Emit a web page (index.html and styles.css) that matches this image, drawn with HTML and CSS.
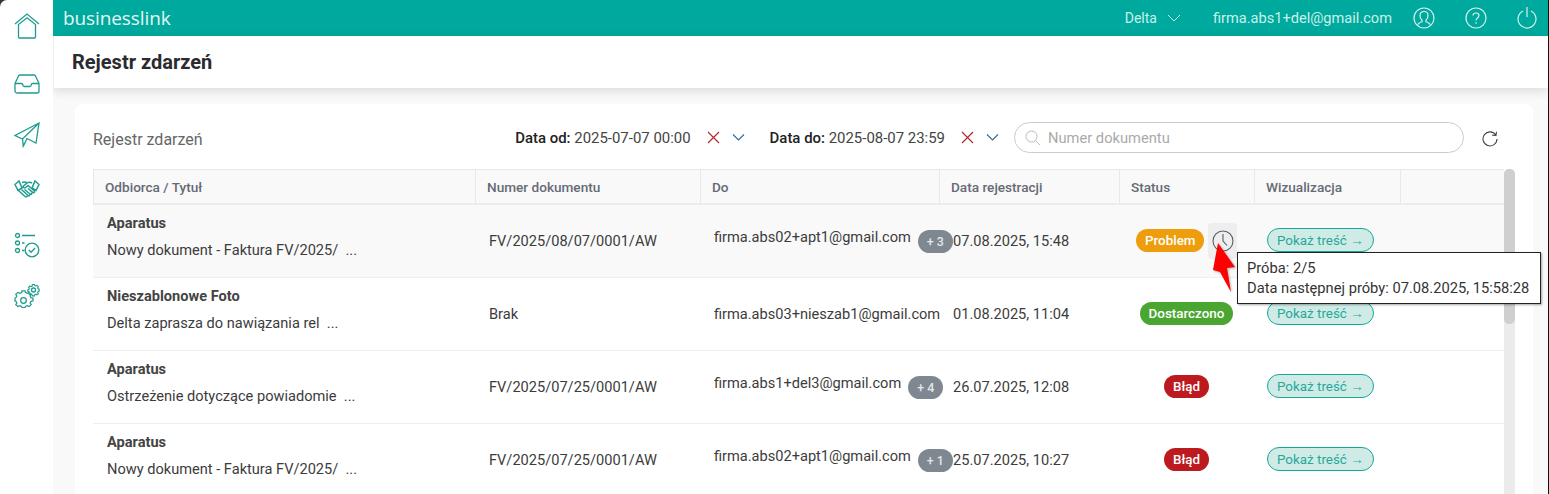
FILE: index.html
```html
<!DOCTYPE html>
<html lang="pl">
<head>
<meta charset="utf-8">
<title>Rejestr zdarzeń</title>
<link rel="stylesheet" href="styles.css">
</head>
<body>
<div class="app">
  <aside class="sidebar">
    <a class="nav-item"><svg width="26" height="26" viewBox="0 0 26 26"><path d="M1 11 13 1l12 10M4.500 11.500V24a1 1 0 0 0 1 1h15a1 1 0 0 0 1-1V11.500L13 4.800z"/></svg></a>
    <a class="nav-item nav-inbox"><svg width="26" height="20" viewBox="0 0 26 20"><path d="M1 9.500 4.500 2a2 2 0 0 1 1.800-1h13.400a2 2 0 0 1 1.800 1L25 9.500V17a2 2 0 0 1-2 2H3a2 2 0 0 1-2-2zM1 9.500h6.500c.7 0 1 .4 1.200 1l.3 1c.2.600.6 1 1.200 1h5.600c.6 0 1-.4 1.200-1l.3-1c.2-.6.5-1 1.200-1H25"/></svg></a>
    <a class="nav-item nav-plane"><svg width="26" height="26" viewBox="0 0 26 26"><path d="M25 1 1 13.500l7.500 3.500L25 1l-3 20-9-4.500-3.800 7.500-.7-7.500M13 16.500l-3.800 8"/></svg></a>
    <a class="nav-item nav-hands"><svg width="26" height="20" viewBox="0 0 26 20"><path d="M1 5.500 5 2l3 7-4 2.500zM25 5.500 21 2l-3 7 4 2.500zM8 3.500c2-.8 3.500-.8 5 .5l-3.500 3c-1 1.200.8 2.500 2 1.500l2.500-2 6.500 5.500M18 4c-2-1.200-3.500-1-5 0M4.500 11.500l6.500 6c1.500 1 2.300-.2 1.800-1M7.500 10.500l6.500 6c1.300.8 2.200-.4 1.500-1.300M10.500 10.500l5.500 4.500c1.300.8 2.300-.4 1.500-1.500M14 9.500l5 4c1.200.6 2-.6 1.300-1.600"/></svg></a>
    <a class="nav-item nav-check"><svg width="26" height="26" viewBox="0 0 26 26"><circle cx="3.500" cy="3.500" r="2"/><circle cx="3.500" cy="11" r="2"/><circle cx="3.500" cy="18.500" r="2"/><path class="thick" d="M8 3.500h13M8 11h2.500M8 18.500h2.500"/><circle cx="18" cy="18" r="6.800"/><path d="m14.800 18 2.300 2.300 4-4.300"/></svg></a>
    <a class="nav-item nav-gears"><svg width="26" height="26" viewBox="0 0 26 26"><circle cx="9.500" cy="16.500" r="2.800"/><path d="M8 9h3l.5 2 1.800.8 1.800-1 2.100 2.100-1 1.800.8 1.800 2 .5v3l-2 .5-.8 1.800 1 1.800-2.100 2.100-1.800-1-1.800.8-.5 1.200H8l-.5-1.200-1.800-.8-1.800 1-2.100-2.100 1-1.800-.8-1.800-1-.5v-3l1-.5.8-1.800-1-1.800 2.100-2.100 1.800 1 1.800-.8z" transform="translate(0 -1.500) scale(1 .92)"/><circle cx="19.500" cy="6" r="2"/><path d="M18.300 1h2.400l.4 1.300 1.200.5 1.200-.7 1.500 1.500-.7 1.200.5 1.200 1.200.4v2.200l-1.200.4-.5 1.200.7 1.200-1.500 1.500-1.200-.7-1.200.5-.4 1.300h-2.400l-.4-1.300-1.200-.5-1.200.7-1.500-1.500.7-1.200-.5-1.200-1.200-.4V7.200l1.200-.4.500-1.200-.7-1.200 1.500-1.500 1.200.7 1.200-.5z" transform="translate(2.300 -.5) scale(.88)"/></svg></a>
  </aside>
  <div class="main">
    <header class="topbar">
      <span class="brand">businesslink</span>
      <div class="topbar-right">
        <span class="org">Delta</span>
        <svg class="org-chev" width="14" height="8" viewBox="0 0 14 8"><path d="m1 1 6 6 6-6"/></svg>
        <span class="user">firma.abs1+del@gmail.com</span>
        <svg class="top-icon ti-user" width="22" height="22" viewBox="0 0 22 22"><circle cx="11" cy="11" r="10"/><path d="M4.500 18.500c.5-2.500 2.500-3.200 4.500-3.800v-1.500C7.500 12 7 10.200 7 8.500 7 6 8.800 4.500 11 4.500S15 6 15 8.500c0 1.700-.5 3.500-2 4.700v1.500c2 .6 4 1.300 4.500 3.800"/></svg>
        <svg class="top-icon" width="22" height="22" viewBox="0 0 22 22"><circle cx="11" cy="11" r="10"/><path d="M8 8.500C8 6.800 9.300 6 11 6s3 1 3 2.500c0 2.500-3 2.500-3 5"/><circle class="dot" cx="11" cy="16" r=".8"/></svg>
        <svg class="top-icon" width="20" height="22" viewBox="0 0 20 22"><path d="M6 4a9 9 0 1 0 8 0M10 0v10"/></svg>
      </div>
    </header>
    <div class="page-head"><h1>Rejestr zdarzeń</h1></div>
    <div class="content">
      <section class="card">
        <div class="toolbar">
          <h2>Rejestr zdarzeń</h2>
          <div class="filters">
            <span class="date"><b>Data od:</b> 2025-07-07 00:00</span>
            <svg class="x" width="13" height="13" viewBox="0 0 13 13"><path d="m1 1 11 11M12 1 1 12"/></svg>
            <svg class="chev" width="13" height="7" viewBox="0 0 13 7"><path d="m1 .5 5.500 5.500L12 .5"/></svg>
            <span class="date date-to"><b>Data do:</b> 2025-08-07 23:59</span>
            <svg class="x" width="13" height="13" viewBox="0 0 13 13"><path d="m1 1 11 11M12 1 1 12"/></svg>
            <svg class="chev" width="13" height="7" viewBox="0 0 13 7"><path d="m1 .5 5.500 5.500L12 .5"/></svg>
            <div class="search">
              <svg width="16" height="16" viewBox="0 0 16 16"><circle cx="6.500" cy="6.500" r="5.500"/><path d="m10.500 10.500 4.500 4.500"/></svg>
              <span>Numer dokumentu</span>
            </div>
            <svg class="refresh" width="16" height="16" viewBox="0 0 16 16"><path d="M13.800 4A7 7 0 1 0 15 8M14.500.8 14 4.500l-3.800-.4"/></svg>
          </div>
        </div>
        <div class="table-area">
          <div class="table">
            <div class="row head">
              <div>Odbiorca / Tytuł</div><div>Numer dokumentu</div><div>Do</div><div>Data rejestracji</div><div>Status</div><div>Wizualizacja</div><div></div>
            </div>
            <div class="row shaded">
              <div class="title"><b>Aparatus</b><span>Nowy dokument - Faktura FV/2025/&nbsp; ...</span></div>
              <div>FV/2025/08/07/0001/AW</div>
              <div class="to"><span>firma.abs02+apt1@gmail.com</span><i class="more">+ 3</i></div>
              <div class="date-cell">07.08.2025, 15:48</div>
              <div class="status has-clock"><em class="badge amber">Problem</em><span class="clock"><svg width="22" height="22" viewBox="0 0 22 22"><circle cx="11" cy="11" r="10"/><path d="M11 4v7l4 4.500"/></svg></span></div>
              <div class="show-cell"><a class="show">Pokaż treść →</a></div><div></div>
            </div>
            <div class="row">
              <div class="title"><b>Nieszablonowe Foto</b><span>Delta zaprasza do nawiązania rel&nbsp; ...</span></div>
              <div>Brak</div>
              <div class="to"><span class="flat">firma.abs03+nieszab1@gmail.com</span></div>
              <div class="date-cell">01.08.2025, 11:04</div>
              <div class="status"><em class="badge green">Dostarczono</em></div>
              <div class="show-cell"><a class="show">Pokaż treść →</a></div><div></div>
            </div>
            <div class="row">
              <div class="title"><b>Aparatus</b><span>Ostrzeżenie dotyczące powiadomie&nbsp; ...</span></div>
              <div>FV/2025/07/25/0001/AW</div>
              <div class="to"><span>firma.abs1+del3@gmail.com</span><i class="more">+ 4</i></div>
              <div class="date-cell">26.07.2025, 12:08</div>
              <div class="status"><em class="badge red">Błąd</em></div>
              <div class="show-cell"><a class="show">Pokaż treść →</a></div><div></div>
            </div>
            <div class="row">
              <div class="title"><b>Aparatus</b><span>Nowy dokument - Faktura FV/2025/&nbsp; ...</span></div>
              <div>FV/2025/07/25/0001/AW</div>
              <div class="to"><span>firma.abs02+apt1@gmail.com</span><i class="more">+ 1</i></div>
              <div class="date-cell">25.07.2025, 10:27</div>
              <div class="status"><em class="badge red">Błąd</em></div>
              <div class="show-cell"><a class="show">Pokaż treść →</a></div><div></div>
            </div>
          </div>
          <div class="scrollbar"><div class="thumb"></div></div>
        </div>
      </section>
    </div>
  </div>
</div>
<div class="tooltip">Próba: 2/5<br>Data następnej próby: 07.08.2025, 15:58:28</div>
<svg class="arrow" width="25" height="52" viewBox="0 0 25 52"><path d="M6 1 23 25l-8 1 4 24L8 30l-7-2z"/></svg>
</body>
</html>
```
FILE: styles.css
```css
* { box-sizing: border-box; }
html, body { margin: 0; height: 100%; overflow: hidden; }
body { font-family: Roboto, "Liberation Sans", sans-serif; font-size: 14.6px; color: #3c3c3c; background: #f9f9f9; }
.app { display: flex; height: 494px; width: 1549px; }

.sidebar { width: 53px; flex: none; background: #fff; display: flex; flex-direction: column; align-items: center; padding-top: 13px; border-top-left-radius: 7px; box-shadow: -8px -8px 0 8px #333; position: relative; z-index: 1; }
.nav-item { width: 26px; height: 26px; display: flex; align-items: center; justify-content: center; }
.nav-inbox { margin-top: 32px; }
.nav-plane { margin-top: 25px; }
.nav-hands { margin-top: 28px; }
.nav-check { margin-top: 30px; }
.nav-gears { margin-top: 26px; }
.nav-item svg { fill: none; stroke: #1f9c90; stroke-width: 1.3; }
.nav-hands svg { stroke-width: 1.5; }
.nav-item .thick { stroke-width: 1.6; }

.main { flex: 1; min-width: 0; display: flex; flex-direction: column; border-right: 1px solid #111; }
.topbar { height: 36px; flex: none; background: #00a99d; display: flex; align-items: center; justify-content: space-between; padding: 0 11px 0 10px; }
.brand { color: #e3f7f4; font-family: "Open Sans", sans-serif; font-size: 19px; letter-spacing: -.1px; }
.topbar-right { display: flex; align-items: center; color: #c9f0ea; }
.org { font-size: 14px; }
.org-chev { margin: 0 32px 0 10px; fill: none; stroke: #c9f0ea; stroke-width: 1; }
.top-icon { fill: none; stroke: #d5f3ee; stroke-width: 1.2; margin-left: 30px; }
.top-icon.ti-user { margin-left: 21px; }
.top-icon .dot { fill: #d5f3ee; stroke: none; }

.page-head { height: 52px; flex: none; background: #fff; padding-left: 18px; display: flex; align-items: center; box-shadow: 0 3px 10px rgba(0,0,0,.12); position: relative; border-left: 1px solid #eee; }
.page-head h1 { margin: 0; font-size: 20px; font-weight: 700; color: #2b2b2f; }

.content { flex: 1; min-height: 0; padding: 16px 15px 0 22px; }
.card { background: #fff; border-radius: 8px 8px 0 0; height: 100%; padding: 18px 0 0 18px; }

.toolbar { display: flex; align-items: center; justify-content: space-between; height: 31px; padding-right: 35px; }
.toolbar h2 { margin: 4px 0 0; font-size: 16px; font-weight: 400; color: #666; }
.filters { display: flex; align-items: center; }
.date { font-size: 14.95px; color: #444; }
.date b { font-weight: 500; color: #222; }
.date-to { margin-left: 25px; }
.x { margin-left: 16px; fill: none; stroke: #b5262d; stroke-width: 1.2; }
.chev { margin-left: 12px; fill: none; stroke: #2f6a96; stroke-width: 1.1; }
.search { width: 450px; height: 31px; margin-left: 15px; border: 1px solid #ccc; border-radius: 16px; display: flex; align-items: center; gap: 7px; padding-left: 10px; color: #aaa; font-size: 14.7px; }
.search svg { fill: none; stroke: #bbb; stroke-width: 1; }
.refresh { margin: 3px 0 0 18px; fill: none; stroke: #444; stroke-width: 1.1; }

.table-area { display: flex; margin-top: 16px; align-items: flex-start; }
.table { width: 1411px; flex: none; }
.row { display: grid; grid-template-columns: 382px 225px 239px 180px 135px 146px 104px; height: 73px; align-items: center; border-bottom: 1px solid #eee; }
.row > div { padding-left: 14px; min-width: 0; }
.shaded { background: #f9f9f9; }
.row.head { height: 36px; background: #f9f9f9; border: 1px solid #e8e8e8; border-width: 1px 0 2px 1px; border-bottom-color: #ececec; color: #666a75; font-weight: 500; font-size: 13.6px; align-items: stretch; }
.row.head > div { padding-left: 11px; display: flex; align-items: center; border-right: 1px solid #e8e8e8; }
.row.head > div:last-child { border-right: 0; }

.title { display: flex; flex-direction: column; gap: 11px; padding-bottom: 9px; }
.title b { font-weight: 700; color: #444; line-height: 16px; }
.title span { line-height: 16px; }

.to { display: flex; align-items: flex-start; }
.to span { position: relative; top: -2px; white-space: nowrap; }
.to .flat { top: 0; }
.more { display: block; flex: none; height: 23px; line-height: 23px; width: 35px; border-radius: 12px; background: #7f8890; color: #e3e6e8; font-style: normal; font-size: 12.5px; font-weight: 500; text-align: center; margin-left: 7px; }

.status { display: flex; align-items: center; justify-content: center; position: relative; }
.row > .status { padding: 0 0 1px; }
.row > .has-clock { justify-content: flex-start; padding-left: 17px; }
.badge { font-style: normal; font-weight: 500; font-size: 13.4px; color: #fff; height: 23px; line-height: 23px; padding: 0 9px; border-radius: 12px; }
.amber { background: #ee9d0c; }
.green { background: #4aa630; }
.red { background: #bd1a1f; }
.clock { position: absolute; left: 89px; top: -6px; width: 29px; height: 36px; background: #eee; border-radius: 4px; display: flex; align-items: center; justify-content: center; }
.clock svg { fill: none; stroke: #555d68; stroke-width: 1.1; }
.row > .show-cell { padding-left: 13px; margin-bottom: 2px; }
.show { display: inline-flex; align-items: center; height: 24px; padding: 0 9px; border: 1px solid #10a99c; border-radius: 12px; background: #d0ebe6; color: #1fa99c; font-size: 13.4px; }

.scrollbar { width: 11px; height: 330px; background: #ebebeb; border-radius: 5px 5px 0 0; }
.thumb { height: 155px; background: #cfcfcf; border-radius: 5px; }

.tooltip { position: absolute; left: 1237px; top: 252px; width: 304px; height: 52px; background: #fff; border: 1px solid #222; box-shadow: 1px 1px 2px rgba(0,0,0,.35); padding: 5px 9px; font-size: 14.7px; line-height: 20px; color: #333; white-space: nowrap; }
.arrow { position: absolute; left: 1212px; top: 242px; fill: #f00; filter: drop-shadow(1px 1px 1px rgba(0,0,0,.3)); }
```
